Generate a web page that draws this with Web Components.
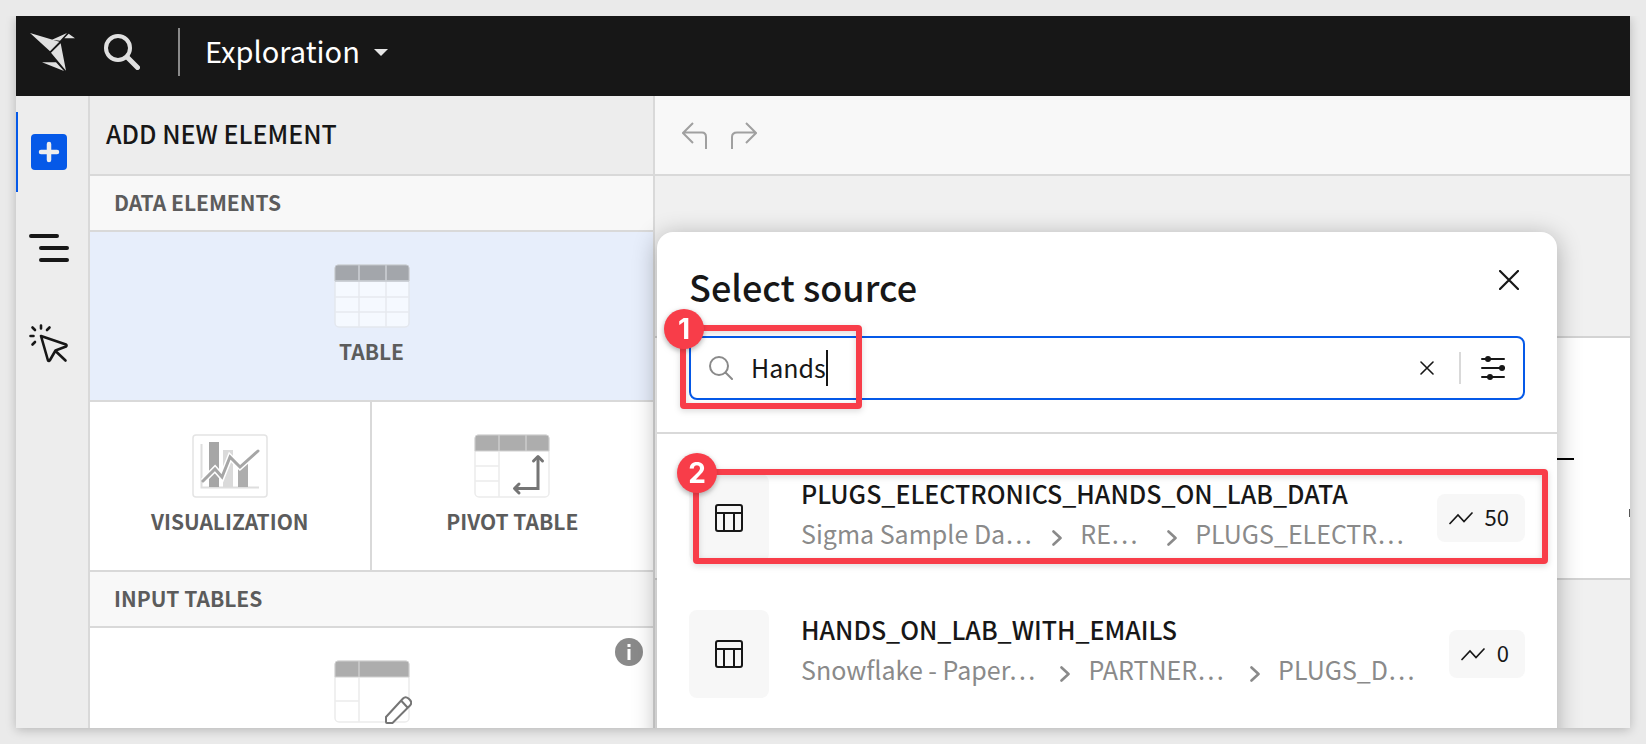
<!DOCTYPE html>
<html lang="en">
<head>
<meta charset="utf-8">
<title>Exploration</title>
<style>
  html {
    --ink: #171717;
    --muted: #5c5c5c;
    --faint: #8a8a8a;
    --line: #d9d9d9;
    --blue: #0559e8;
    --red: #f83d49;
    --chip: #f7f7f7;
  }
  body {
    margin: 0;
    padding: 16px;
    box-sizing: border-box;
    height: 100vh;
    overflow: hidden;
    background: #eaeaea;
    color: var(--ink);
    font-family: "Noto Sans CJK SC", "Noto Sans", sans-serif;
    font-size: 25px;
    line-height: 40px;
  }
</style>
</head>
<body>
<app-window>
  <nav-bar slot="nav" label="Exploration"></nav-bar>
  <side-rail slot="rail"></side-rail>
  <element-panel slot="panel"></element-panel>
  <work-canvas slot="canvas">
    <source-dialog>
      <source-item name="PLUGS_ELECTRONICS_HANDS_ON_LAB_DATA" uses="50">
        <path-crumb style="--share:236">Sigma Sample Da…</path-crumb>
        <path-crumb style="--share:71">RE…</path-crumb>
        <path-crumb style="--share:210">PLUGS_ELECTR…</path-crumb>
      </source-item>
      <source-item name="HANDS_ON_LAB_WITH_EMAILS" uses="0">
        <path-crumb style="--share:244">Snowflake - Paper…</path-crumb>
        <path-crumb style="--share:146">PARTNER…</path-crumb>
        <path-crumb style="--share:139">PLUGS_D…</path-crumb>
      </source-item>
      <step-callout slot="callout" class="first" number="1"></step-callout>
      <step-callout slot="callout" class="second" number="2"></step-callout>
    </source-dialog>
  </work-canvas>
</app-window>

<script>
const reset = `
  :host, * { box-sizing: border-box; }
  button, input {
    font: inherit; color: inherit; background: none; border: 0; margin: 0; padding: 0;
    outline: none; border-radius: 0;
  }
  button { cursor: pointer; }
  svg { display: block; flex: none; }
`;

function define(name, css, markup) {
  customElements.define(name, class extends HTMLElement {
    constructor() {
      super();
      const html = typeof markup === 'function' ? markup(this) : markup;
      this.attachShadow({ mode: 'open' }).innerHTML = `<style>${reset}${css}</style>${html}`;
    }
  });
}

define('app-window', `
  :host {
    display: grid; height: 100%;
    grid-template: 80px minmax(0, 1fr) / 74px 565px minmax(0, 1fr);
    box-shadow: 0 2px 10px rgba(0,0,0,.22); clip-path: inset(0 -16px -16px -16px);
  }
  .nav { grid-column: 1 / -1; }
  .body { grid-column: 1 / -1; display: grid; grid-template-columns: subgrid; overflow: hidden; min-height: 0; }
`, `
  <header class="nav"><slot name="nav"></slot></header>
  <div class="body">
    <slot name="rail"></slot>
    <slot name="panel"></slot>
    <slot name="canvas"></slot>
  </div>
`);

define('nav-bar', `
  :host {
    display: flex; align-items: center; height: 80px; padding: 0 14px 8px;
    background: #171717; color: #fff;
  }
  .search { margin-left: 29px; }
  .rule { width: 2px; height: 48px; margin: 0 25px 0 38px; background: #8a8a8a; }
  .title { display: flex; align-items: center; gap: 14px; font-size: 29px; }
  .title span { padding-bottom: 4px; }
`, el => `
  <svg width="45" height="38" viewBox="90 99 135 114" fill="#e0e0e0" role="img" aria-label="Home">
    <path d="M90 99 178 125 150 154ZM156 119 201 99 180 122ZM206 101 225 115H193ZM153 158 182 130 198 212ZM126 187H168L192 213Z"/>
  </svg>
  <button class="search" aria-label="Search">
    <svg width="36" height="36" viewBox="0 0 36 36" fill="none" stroke="#e0e0e0">
      <circle cx="14" cy="14" r="12" stroke-width="4"/>
      <path d="M23 23 33.500 33.500" stroke-width="5" stroke-linecap="round"/>
    </svg>
  </button>
  <div class="rule"></div>
  <button class="title"><span>${el.getAttribute('label')}</span>
    <svg width="14" height="7" viewBox="0 0 14 7" fill="#e6e6e6"><path d="M0 0H14L7 7Z"/></svg>
  </button>
`);

define('side-rail', `
  :host {
    display: flex; flex-direction: column; gap: 16px; padding-top: 16px;
    background: #ededed; border-right: 2px solid var(--line);
  }
  button {
    height: 80px; padding-right: 8px; border-left: 2px solid transparent;
    display: grid; place-items: center;
  }
  .active { border-color: var(--blue); }
`, `
  <button class="active" aria-label="Add element">
    <svg width="36" height="36" viewBox="0 0 36 36">
      <rect width="36" height="36" rx="4" fill="#0559e8"/>
      <path d="M18 10V26M10 18H26" stroke="#ededed" stroke-width="4.500" stroke-linecap="round"/>
    </svg>
  </button>
  <button aria-label="Outline">
    <svg width="40" height="28" viewBox="0 0 40 28" stroke="#171717" stroke-width="4" stroke-linecap="round">
      <path d="M2 2H28M12 14H38M12 26H38"/>
    </svg>
  </button>
  <button aria-label="Actions">
    <svg width="40" height="40" viewBox="0 0 40 40" fill="none" stroke="#171717" stroke-width="2.600" stroke-linecap="round" stroke-linejoin="round">
      <path d="M12 12 37 20.500Q38 21.500 37 22.500L26.500 26.500 21 36Q20 37.500 19 36.500ZM27 27.500 36.500 36.500"/>
      <path d="M12 1.500V4.500M1.500 12H4.500M3.500 3.500 6 6M20.500 3.500 18 6M3.500 20.500 6 18"/>
    </svg>
  </button>
`);

const pictures = {
  table: `
    <svg width="76" height="64" viewBox="0 0 76 64">
      <rect x="1" y="1" width="74" height="62" rx="4" fill="#f5f9ff" stroke="#e3e7ee" stroke-width="1.500"/>
      <path d="M1 17V4Q1 1 4 1H72Q75 1 75 4V17Z" fill="#a3a6ab" stroke="#c3c6cb"/>
      <path d="M25 1V17M52 1V17" stroke="#c3c6cb" stroke-width="2"/>
      <path d="M1 17H75" stroke="#c9ccd2" stroke-width="1.500"/>
      <path d="M25 18V63M52 18V63M1 33H75M1 48H75" stroke="#e6e9ef" stroke-width="1.500"/>
    </svg>`,
  chart: `
    <svg width="76" height="64" viewBox="1 0 76 64" fill="none">
      <rect x="2" y="1" width="74" height="62" rx="3" fill="#fff" stroke="#e4e4e4" stroke-width="1.500"/>
      <path d="M10.500 10V53.500H68" stroke="#dedede" stroke-width="2"/>
      <path d="M18 8H28V53H18Z" fill="#a6a6a6"/>
      <path d="M32 16H42V53H32Z" fill="#dadada"/>
      <path d="M47 30H57V53H47Z" fill="#adadad"/>
      <path d="M12 47 24 35 31 43 39 23 49 33 67 17" stroke="#fff" stroke-width="6"/>
      <path d="M12 47 24 35 31 43 39 23 49 33 67 17" stroke="#a6a6a6" stroke-width="3" stroke-linecap="round"/>
    </svg>`,
  pivot: `
    <svg width="76" height="64" viewBox="0 0 76 64" fill="none">
      <rect x="1" y="1" width="74" height="62" rx="4" fill="#fff" stroke="#ececec" stroke-width="1.500"/>
      <path d="M1 17V4Q1 1 4 1H72Q75 1 75 4V17Z" fill="#adadad" stroke="#d0d0d0"/>
      <path d="M25 1V17M52 1V17" stroke="#ccc" stroke-width="1.500"/>
      <path d="M25 18V63M1 32H25M1 47H25" stroke="#ececec" stroke-width="1.500"/>
      <path d="M64 23V54.500H42" stroke="#757575" stroke-width="3"/>
      <path d="M59.500 27 64 22.500 68.500 27M45 50 40.500 54.500 45 59" stroke="#757575" stroke-width="3" stroke-linejoin="round" stroke-linecap="round"/>
    </svg>`,
  input: `
    <svg width="80" height="66" viewBox="-2 0 80 66" fill="none">
      <rect x="1" y="1" width="74" height="61" rx="4" fill="#fff" stroke="#ececec" stroke-width="1.500"/>
      <path d="M1 17V4Q1 1 4 1H72Q75 1 75 4V17Z" fill="#adadad" stroke="#d0d0d0"/>
      <path d="M25 1V17" stroke="#ccc" stroke-width="1.500"/>
      <path d="M25 18V62M1 41H25" stroke="#ececec" stroke-width="1.500"/>
      <path d="M52 62V57L69 38.500Q71.500 36 74.500 38.500L76 40Q78.500 43 76 45.500L58.500 63H53Q52 63 52 62ZM67.500 41 73.500 47.500" fill="#fff" stroke="#757575" stroke-width="2"/>
    </svg>`,
};

define('element-tile', `
  :host { display: grid; position: relative; background: #fff; }
  :host([selected]) { background: #e7eefb; }
  button {
    height: 168px; padding-top: 32px; color: var(--muted); font-size: 21px; font-weight: 700; line-height: 30px;
    display: flex; flex-direction: column; align-items: center; gap: 8px;
  }
  .picture { height: 64px; }
  .info { position: absolute; top: 10px; right: 10px; width: 28px; height: 28px; border-radius: 14px; background: #8a8a8a; }
`, el => `
  <button><span class="picture">${pictures[el.getAttribute('picture')]}</span><span><slot></slot></span></button>
  ${el.hasAttribute('info') ? `
  <span class="info" role="img" aria-label="More information">
    <svg width="28" height="28" viewBox="0 0 28 28" fill="#fff"><path d="M12.500 6H15.500V9H12.500ZM12.500 11H15.500V22H12.500Z"/></svg>
  </span>` : ''}
`);

define('element-panel', `
  :host { display: block; min-height: 0; background: #fff; border-right: 2px solid var(--line); }
  h2, h3 { margin: 0; display: flex; align-items: center; border-bottom: 2px solid var(--line); }
  h2 { height: 80px; padding: 0 0 4px 16px; background: #ededed; font-size: 25px; font-weight: 500; }
  h3 { height: 56px; padding: 0 0 2px 24px; background: #f8f8f8; color: var(--muted); font-size: 21px; font-weight: 700; }
  .pair { display: grid; grid-template-columns: 1fr 1fr; }
  .wide, .pair { border-bottom: 2px solid var(--line); }
  .pair > :first-child { border-right: 2px solid var(--line); }
`, `
  <h2>ADD NEW ELEMENT</h2>
  <h3>DATA ELEMENTS</h3>
  <element-tile class="wide" picture="table" selected>TABLE</element-tile>
  <div class="pair">
    <element-tile picture="chart">VISUALIZATION</element-tile>
    <element-tile picture="pivot">PIVOT TABLE</element-tile>
  </div>
  <h3>INPUT TABLES</h3>
  <element-tile picture="input" info></element-tile>
`);

define('work-canvas', `
  :host { display: block; position: relative; min-width: 0; background: #f0f0f0; }
  .tools { display: flex; align-items: center; gap: 23px; height: 80px; padding: 2px 27px 0; background: #f8f8f8; border-bottom: 2px solid var(--line); }
  .sheet {
    display: flex; align-items: center; justify-content: flex-end; height: 244px; margin-top: 160px; padding-top: 2px;
    background: #fff; border: solid #d3d3d3; border-width: 2px 0; position: relative;
  }
  .dash { width: 80px; height: 2px; margin-right: 56px; background: #000; }
  .edge { position: absolute; right: 0; top: 171px; width: 1px; height: 8px; background: #555; }
`, `
  <div class="tools">
    <button aria-label="Undo">
      <svg width="26" height="28" viewBox="0 0 26 28" fill="none" stroke="#a0a0a0" stroke-width="2"><path d="M11 1 1 11 11 21M1 10.500H20Q24 10.500 24 15V27"/></svg>
    </button>
    <button aria-label="Redo">
      <svg width="26" height="28" viewBox="0 0 26 28" fill="none" stroke="#a0a0a0" stroke-width="2"><path d="M15 1 25 11 15 21M25 10.500H6Q1 10.500 1 15V27"/></svg>
    </button>
  </div>
  <div class="sheet"><div class="dash"></div><div class="edge"></div></div>
  <slot></slot>
`);

define('source-dialog', `
  :host {
    position: absolute; left: 2px; top: 136px; width: 900px; height: 700px;
    background: #fff; border-radius: 16px; box-shadow: 0 4px 24px rgba(0,0,0,.3);
  }
  .head { padding: 32px 32px 32px; border-bottom: 2px solid var(--line); }
  .title { display: flex; justify-content: space-between; align-items: flex-start; padding-right: 6px; margin-bottom: 28px; }
  h1 { margin: 0; font-size: 36px; font-weight: 500; line-height: 44px; }
  .close { padding-top: 6px; }
  .list { display: grid; gap: 48px; padding: 40px 32px; }
  ::slotted(step-callout) { position: absolute; }
  ::slotted(.first) { left: 23px; top: 93px; width: 182px; height: 84px; }
  ::slotted(.second) { left: 36px; right: 9px; top: 237px; height: 95px; }
`, `
  <div class="head">
    <div class="title">
      <h1>Select source</h1>
      <button class="close" aria-label="Close">
        <svg width="20" height="20" viewBox="0 0 20 20" stroke="#171717" stroke-width="2.200" stroke-linecap="round"><path d="M1 1 19 19M19 1 1 19"/></svg>
      </button>
    </div>
    <search-field></search-field>
  </div>
  <div class="list"><slot></slot></div>
  <slot name="callout"></slot>
`);

define('search-field', `
  :host { display: flex; align-items: center; height: 64px; padding: 0 18px; border: 2px solid var(--blue); border-radius: 8px; }
  input { field-sizing: content; margin-left: 18px; height: 40px; padding-bottom: 2px; caret-color: transparent; }
  .caret { width: 2px; height: 36px; background: var(--ink); }
  .clear { margin-left: auto; }
  .rule { width: 2px; height: 32px; margin: 0 20px 0 25px; background: var(--line); }
`, `
  <svg width="24" height="24" viewBox="0 0 24 24" fill="none" stroke="#8a8a8a" stroke-width="2" stroke-linecap="round"><circle cx="10" cy="10" r="9"/><path d="M16.500 16.500 23 23"/></svg>
  <input type="text" aria-label="Search sources" value="Hands">
  <span class="caret"></span>
  <button class="clear" aria-label="Clear">
    <svg width="14" height="14" viewBox="0 0 14 14" stroke="#171717" stroke-width="1.600" stroke-linecap="round"><path d="M1 1 13 13M13 1 1 13"/></svg>
  </button>
  <span class="rule"></span>
  <button aria-label="Filters">
    <svg width="24" height="24" viewBox="0 0 24 24" stroke="#171717" stroke-width="2" stroke-linecap="round">
      <path d="M1 3H23M1 12H23M1 21H23"/>
      <g fill="#171717" stroke="none"><circle cx="7" cy="3" r="3"/><circle cx="21" cy="12" r="3"/><circle cx="9" cy="21" r="3"/></g>
    </svg>
  </button>
`);

define('source-item', `
  :host { display: flex; align-items: center; gap: 32px; height: 88px; }
  .tile { width: 80px; height: 88px; border-radius: 8px; background: var(--chip); display: grid; place-items: center; flex: none; }
  .text { flex: 1; min-width: 0; height: 88px; }
  .name { display: block; width: 100%; text-align: left; font-weight: 500; line-height: 38px; white-space: nowrap; }
  .path { display: flex; color: var(--faint); line-height: 42px; }
  .uses { display: flex; align-items: center; gap: 12px; height: 48px; padding: 0 16px 0 12px; border-radius: 8px; background: var(--chip); font-size: 22px; }
  .uses span { padding-bottom: 4px; }
`, el => `
  <span class="tile">
    <svg width="28" height="28" viewBox="0 0 28 28" fill="none" stroke="#171717" stroke-width="2"><rect x="1" y="1" width="26" height="26" rx="2"/><path d="M1 9H27M9 9V27M19 9V27"/></svg>
  </span>
  <div class="text">
    <button class="name">${el.getAttribute('name')}</button>
    <div class="path"><slot></slot></div>
  </div>
  <div class="uses">
    <svg width="24" height="14" viewBox="0 0 24 14" fill="none" stroke="#171717" stroke-width="1.700" stroke-linecap="round"><path d="M1 12.500 9 4 15 10.500 23 2"/></svg>
    <span>${el.getAttribute('uses')}</span>
  </div>
`);

define('path-crumb', `
  :host { display: flex; flex: var(--share) 1 44px; min-width: 0; white-space: nowrap; }
  :host(:last-child) { flex-basis: 0; }
  .label { flex: 1; min-width: 0; }
  .sep { flex: none; width: 44px; padding: 18px 18px 0 16px; }
  :host(:last-child) .sep { display: none; }
`, `
  <span class="label"><slot></slot></span>
  <span class="sep">
    <svg width="10" height="16" viewBox="0 0 10 16" fill="none" stroke="#8a8a8a" stroke-width="2.600" stroke-linecap="round" stroke-linejoin="round"><path d="M1.500 1.500 8.500 8 1.500 14.500"/></svg>
  </span>
`);

define('step-callout', `
  :host { border: 6px solid var(--red); border-radius: 4px; filter: drop-shadow(0 2px 3px rgba(0,0,0,.15)); pointer-events: none; }
  .number {
    position: absolute; left: -22px; top: -22px; width: 40px; height: 40px; border-radius: 20px;
    background: var(--red); color: #fff; text-align: center; font: 700 28px/40px Inter, sans-serif;
    box-shadow: 0 2px 5px rgba(0,0,0,.2);
  }
`, el => `<span class="number">${el.getAttribute('number')}</span>`);
</script>
</body>
</html>
